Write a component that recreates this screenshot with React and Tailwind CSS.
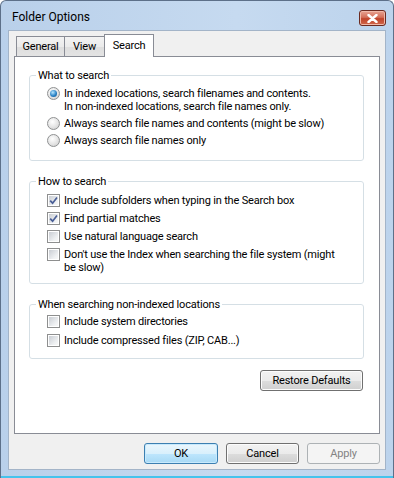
import React from "react";

function Radio({ checked }) {
  return (
    <span className="flex h-[13px] w-[13px] shrink-0 items-center justify-center rounded-full border border-[#8f9192] bg-[radial-gradient(circle_at_40%_35%,#ffffff,#e4e4e4_55%,#c8c8c8)]">
      {checked && (
        <span className="h-[7px] w-[7px] rounded-full bg-[radial-gradient(circle_at_40%_35%,#b7e6ff,#2b83c6_55%,#0b4c86)]" />
      )}
    </span>
  );
}

function Check({ checked }) {
  return (
    <span className="flex h-[13px] w-[13px] shrink-0 border border-[#8e8f8f] bg-white p-px">
      <span className="flex h-full w-full items-center justify-center bg-[linear-gradient(135deg,#c9cdd3,#eef0f2_70%,#f8f8f8)]">
        {checked && (
          <svg width="9" height="9" viewBox="0 0 9 9">
            <path d="M1.2 4.6 L3.6 7.2 L8 1.4" stroke="#4a5f97" strokeWidth="1.7" fill="none" />
          </svg>
        )}
      </span>
    </span>
  );
}

function Item({ children, control }) {
  return (
    <div className="flex items-start gap-[4px] leading-[13px]">
      <span className="shrink-0">{control}</span>
      <span>{children}</span>
    </div>
  );
}

function Group({ title, children, className }) {
  return (
    <fieldset className={"rounded-[3px] border border-[#d5dfe5] " + className}>
      <legend className="ml-[6px] px-[2px] leading-[15px] text-black">{title}</legend>
      {children}
    </fieldset>
  );
}

function Button({ children, variant, className }) {
  const base =
    "flex h-[21px] items-center justify-center rounded-[3px] border leading-none ";
  if (variant === "default")
    return (
      <div
        className={
          base +
          "border-[#3c7fb1] bg-[linear-gradient(#eaf6fd_0%,#d9f0fc_50%,#bee6fd_51%,#a7d9f5_100%)] shadow-[inset_0_0_0_1px_#c8eafd] text-black " +
          className
        }
      >
        {children}
      </div>
    );
  if (variant === "disabled")
    return (
      <div className={base + "border-[#adb2b5] bg-[#f4f4f4] text-[#838383] " + className}>
        {children}
      </div>
    );
  return (
    <div
      className={
        base +
        "border-[#707070] bg-[linear-gradient(#f2f2f2_0%,#ebebeb_50%,#dddddd_51%,#cfcfcf_100%)] shadow-[inset_0_0_0_1px_#fcfcfc] text-black " +
        className
      }
    >
      {children}
    </div>
  );
}

export default function App() {
  return (
    <div className="flex h-[478px] w-[394px] flex-col overflow-hidden rounded-t-[6px] border border-b-0 border-[#5d7089] bg-[linear-gradient(90deg,#b9d0ea,#c6daf0_60%,#bcd3ec)] font-['Roboto','Liberation_Sans',sans-serif] text-[11px] tracking-[-0.18px] text-black">
      {/* Title bar */}
      <div className="flex h-[29px] shrink-0 items-start">
        <div className="ml-[11px] mt-[8px] text-[12px] leading-[16px] tracking-normal text-black">Folder Options</div>
        <div className="ml-auto mr-[7px] mt-[9px] flex h-[16px] w-[27px] items-center justify-center rounded-[3px] border border-[#6b2a20] bg-[linear-gradient(#e8a493_0%,#d4705a_45%,#c0432a_55%,#d0684c_100%)] shadow-[inset_0_0_0_1px_#f0b8a8]">
          <svg width="11" height="9" viewBox="0 0 11 9">
            <path d="M1.5 1 L9.5 8 M9.5 1 L1.5 8" stroke="#ffffff" strokeWidth="2.4" strokeLinecap="round" />
          </svg>
        </div>
      </div>

      {/* Client area */}
      <div className="mx-[7px] flex flex-1 flex-col border border-[#a3b4c8] bg-[#f0f0f0] px-[5px] pt-[3px]">
        {/* Tabs */}
        <div className="flex h-[22px] items-end pl-[2px]">
          <div className="flex h-[20px] w-[49px] items-center justify-center border border-b-0 border-[#898c95] bg-[linear-gradient(#f3f3f3,#ebebeb_50%,#dedede_51%,#e3e3e3)] pt-px">
            General
          </div>
          <div className="-ml-px flex h-[20px] w-[41px] items-center justify-center border border-b-0 border-[#898c95] bg-[linear-gradient(#f3f3f3,#ebebeb_50%,#dedede_51%,#e3e3e3)] pt-px">
            View
          </div>
          <div className="relative z-10 -mb-px -ml-px flex h-[23px] w-[50px] items-start justify-center border border-b-0 border-[#898c95] bg-white pt-[3px]">
            Search
          </div>
        </div>

        {/* Panel */}
        <div className="flex h-[378px] flex-col border border-[#898c95] bg-white pl-[14px] pr-[15px] pt-[11px]">
          <Group title="What to search" className="">
            <div className="flex flex-col gap-[4px] pb-[13px] pl-[17px] pt-[4px]">
              <Item control={<Radio checked />}>
                In indexed locations, search filenames and contents.
                <br />
                In non-indexed locations, search file names only.
              </Item>
              <Item control={<Radio />}>Always search file names and contents (might be slow)</Item>
              <Item control={<Radio />}>Always search file names only</Item>
            </div>
          </Group>

          <Group title="How to search" className="mt-[13px]">
            <div className="flex flex-col gap-[5px] pb-[9px] pl-[17px] pr-[24px] pt-[5px]">
              <Item control={<Check checked />}>Include subfolders when typing in the Search box</Item>
              <Item control={<Check checked />}>Find partial matches</Item>
              <Item control={<Check />}>Use natural language search</Item>
              <Item control={<Check />}>
                Don't use the Index when searching the file system (might be slow)
              </Item>
            </div>
          </Group>

          <Group title="When searching non-indexed locations" className="mt-[13px]">
            <div className="flex flex-col gap-[6px] pb-[11px] pl-[17px] pt-[3px]">
              <Item control={<Check />}>Include system directories</Item>
              <Item control={<Check />}>Include compressed files (ZIP, CAB...)</Item>
            </div>
          </Group>

          <div className="mt-[11px] flex justify-end pr-px">
            <Button className="w-[103px]">Restore Defaults</Button>
          </div>
        </div>

        {/* Buttons */}
        <div className="mt-[9px] flex justify-end gap-[8px]">
          <Button variant="default" className="w-[74px]">OK</Button>
          <Button className="w-[73px]">Cancel</Button>
          <Button variant="disabled" className="w-[73px]">Apply</Button>
        </div>
      </div>
      <div className="h-[6px] shrink-0" />
      <div className="h-[2px] shrink-0 bg-[#45c3ec]" />
    </div>
  );
}
